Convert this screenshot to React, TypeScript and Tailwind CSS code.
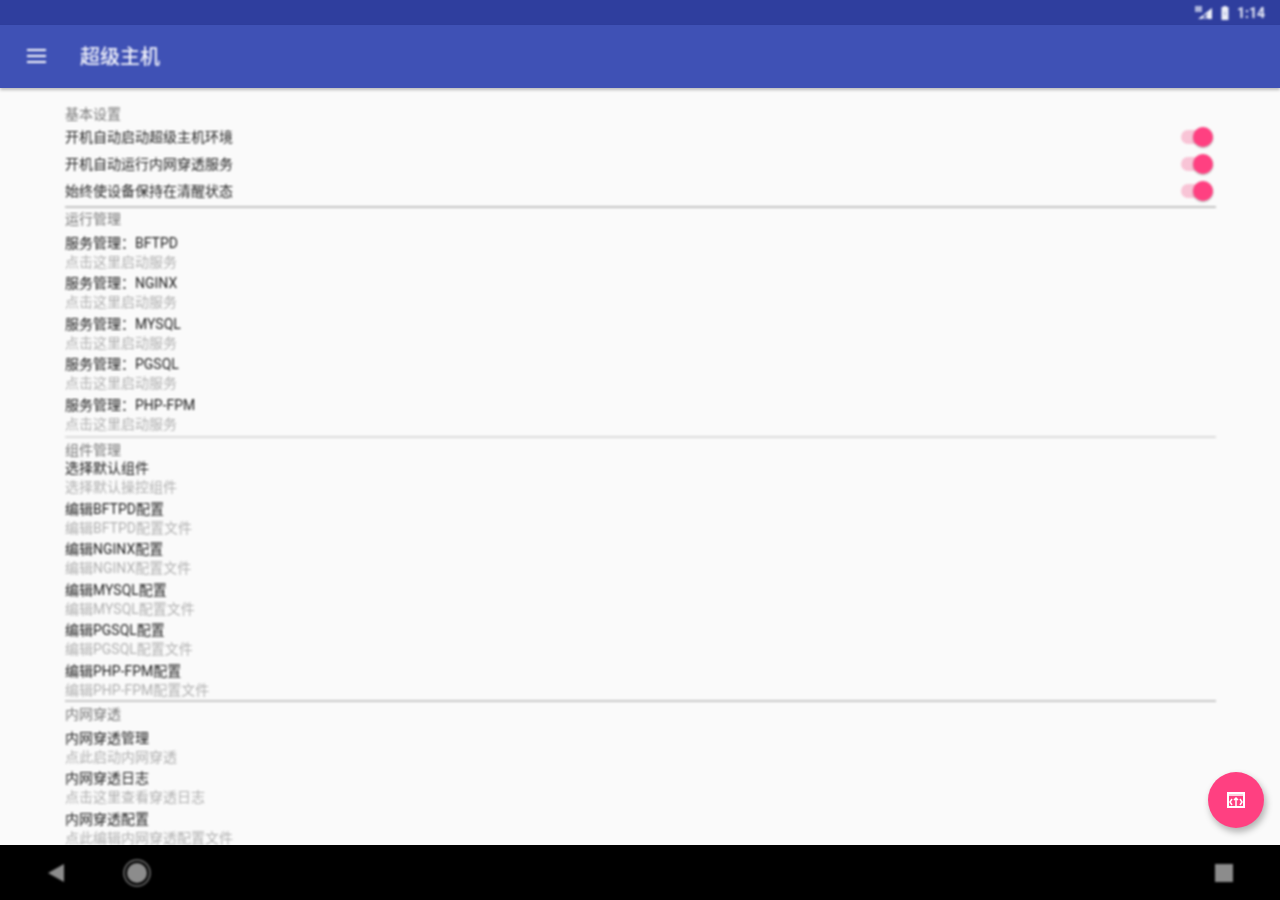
const font = "[font-family:Roboto,'Noto_Sans_CJK_SC',sans-serif]";

function Section({ title, children, gap }: { title: string; children: React.ReactNode; gap: string }) {
  return (
    <div>
      <div className={`h-[20px] text-[14px] leading-[20px] text-[#787878] ${gap}`}>{title}</div>
      {children}
    </div>
  );
}

function Toggle({ label }: { label: string }) {
  return (
    <div className="flex h-[27px] items-center justify-between text-[14px] text-[#242424]">
      <span>{label}</span>
      <span className="relative mb-[2px] mr-[3px] block h-[14px] w-[32px] rounded-full bg-[#f8c4d6]">
        <span className="absolute right-0 top-[-3px] h-[20px] w-[20px] rounded-full bg-[#ff4081] shadow-[0_1px_2px_rgba(0,0,0,0.3)]" />
      </span>
    </div>
  );
}

function Item({ title, sub }: { title: string; sub: string }) {
  return (
    <div className="h-[40.5px]">
      <div className="h-[19px] text-[14px] leading-[19px] text-[#1c1c1c]">{title}</div>
      <div className="h-[19px] text-[14px] leading-[19px] text-[#b0b0b0]">{sub}</div>
    </div>
  );
}

const Divider = ({ cls }: { cls: string }) => <div className={`h-[2px] ${cls}`} />;

export default function App() {
  const click = "点击这里启动服务";
  return (
    <div className={`relative flex h-[900px] w-[1280px] flex-col overflow-hidden bg-black ${font}`}>
      <div className="flex h-[25px] items-center justify-end bg-[#2f3e9e] pr-[15px] text-[#e6e9f5]">
        <div className="flex items-center blur-[0.8px]">
          <svg width="20" height="16" viewBox="0 0 20 16" className="mr-[6px]">
            <path d="M4 14 L18 3 V14 Z" fill="#eef0f8" />
            <path d="M1 1 h7 v6 h-7 z" fill="#aeb6dc" />
            <path d="M9 9 L13 14 M13 9 L9 14" stroke="#2f3e9e" strokeWidth="1.2" />
          </svg>
          <svg width="10" height="16" viewBox="0 0 10 16" className="mr-[7px]">
            <path d="M3.5 1 h3 v1 h2 v13 h-7 v-13 h2 z" fill="#eef0f8" />
            <path d="M5.5 5 L3.5 9 H5 L4.5 12 L6.5 8 H5 Z" fill="#aab2d8" />
          </svg>
          <span className="text-[14px] font-bold leading-none">1:14</span>
        </div>
      </div>

      <div className="relative z-10 flex h-[63px] items-center bg-[#3f51b5] pl-[27px] shadow-[0_2px_3px_rgba(0,0,0,0.25)]">
        <div className="flex items-center blur-[0.8px]">
          <svg width="19" height="14" viewBox="0 0 19 14" className="mb-[2px]">
            <path d="M0 1 h19 M0 7 h19 M0 13 h19" stroke="#ffffff" strokeWidth="2" />
          </svg>
          <span className="ml-[34px] text-[20px] font-medium leading-none text-[#f4f5fc]">超级主机</span>
        </div>
      </div>

      <div className="relative flex-1 overflow-hidden bg-[#fafafa] pl-[65px] pr-[64px] pt-[16px]">
        <div className="blur-[0.8px]">
          <Section title="基本设置" gap="">
            <Toggle label="开机自动启动超级主机环境" />
            <Toggle label="开机自动运行内网穿透服务" />
            <Toggle label="始终使设备保持在清醒状态" />
          </Section>
          <Divider cls="mt-[1px] bg-[#c4c4c4]" />
          <Section title="运行管理" gap="mt-[1px] mb-[4.5px]">
            <Item title="服务管理：BFTPD" sub={click} />
            <Item title="服务管理：NGINX" sub={click} />
            <Item title="服务管理：MYSQL" sub={click} />
            <Item title="服务管理：PGSQL" sub={click} />
            <Item title="服务管理：PHP-FPM" sub={click} />
          </Section>
          <Divider cls="bg-[#dcdcdc]" />
          <Section title="组件管理" gap="mt-[2px] mb-[-1px]">
            <Item title="选择默认组件" sub="选择默认操控组件" />
            <Item title="编辑BFTPD配置" sub="编辑BFTPD配置文件" />
            <Item title="编辑NGINX配置" sub="编辑NGINX配置文件" />
            <Item title="编辑MYSQL配置" sub="编辑MYSQL配置文件" />
            <Item title="编辑PGSQL配置" sub="编辑PGSQL配置文件" />
            <Item title="编辑PHP-FPM配置" sub="编辑PHP-FPM配置文件" />
          </Section>
          <Divider cls="mt-[-2px] bg-[#c8c8c8]" />
          <Section title="内网穿透" gap="mt-[2px] mb-[4.5px]">
            <Item title="内网穿透管理" sub="点此启动内网穿透" />
            <Item title="内网穿透日志" sub="点击这里查看穿透日志" />
            <Item title="内网穿透配置" sub="点此编辑内网穿透配置文件" />
          </Section>
        </div>

        <button className="absolute bottom-[17px] right-[16px] flex h-[56px] w-[56px] items-center justify-center rounded-full bg-[#ff4081] shadow-[2px_4px_7px_rgba(0,0,0,0.3)] blur-[0.6px]">
          <svg width="20" height="18" viewBox="0 0 20 18">
            <path d="M2 2 h16 v14 h-16 z" fill="none" stroke="#ffffff" strokeWidth="2" />
            <path d="M2 4 h16" stroke="#ffffff" strokeWidth="1.5" />
            <path d="M10 7 v9 M8 9 l2 -2 l2 2 M6 8 l-2 3 l2 3 M14 8 l2 3 l-2 3" fill="none" stroke="#ffffff" strokeWidth="1.5" />
          </svg>
        </button>
      </div>

      <div className="relative z-10 flex h-[55px] items-center justify-between bg-black pl-[47px] pr-[47px] pt-[1px]">
        <div className="flex items-center gap-[58px] blur-[0.8px]">
          <svg width="18" height="20" viewBox="0 0 18 20">
            <path d="M17 1 V19 L1 10 Z" fill="#8c8c8c" />
          </svg>
          <svg width="28" height="28" viewBox="0 0 28 28">
            <circle cx="14" cy="14" r="13" fill="none" stroke="#6e6e6e" strokeWidth="1.6" />
            <circle cx="14" cy="14" r="10" fill="#8c8c8c" />
          </svg>
        </div>
        <div className="h-[18px] w-[18px] bg-[#8c8c8c] blur-[0.8px]" />
      </div>
    </div>
  );
}
